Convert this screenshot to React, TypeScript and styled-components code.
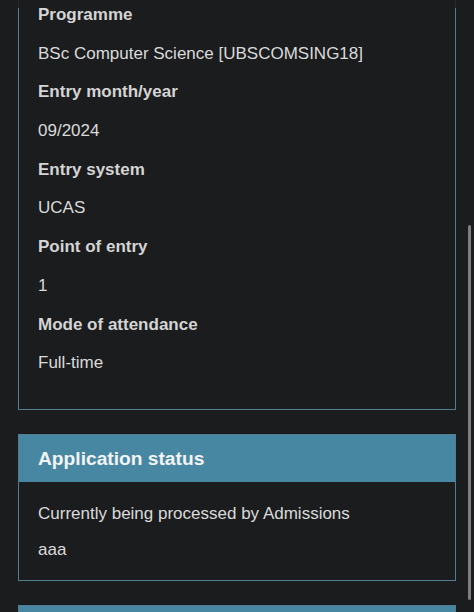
import React from 'react';
import styled, { createGlobalStyle } from 'styled-components';

const GlobalStyle = createGlobalStyle`
  html, body {
    margin: 0;
    padding: 0;
    background: #1b1c1e;
    overflow: hidden;
  }
  body {
    font-family: "Liberation Sans", Arial, sans-serif;
    color: #dcdcdc;
  }
`;

const Page = styled.div`
  display: flex;
  flex-direction: column;
  gap: 24px;
  padding: 0 18px;
  margin-top: -20px;
`;

const Card = styled.section`
  border: 1px solid #527d91;
  background: #1b1c1e;
`;

const CardHeader = styled.h2`
  margin: 0;
  height: 47px;
  display: flex;
  align-items: center;
  padding: 0 19px;
  background: #4787a2;
  color: #f2f4f5;
  font-size: 19.2px;
  font-weight: 700;
`;

const CardBody = styled.div<{ $gap: number; $top?: number; $bottom?: number }>`
  display: flex;
  flex-direction: column;
  gap: ${p => p.$gap}px;
  padding: ${p => p.$top ?? 19}px 19px ${p => p.$bottom ?? 18}px;
`;

const Label = styled.div`
  font-size: 17px;
  line-height: 22px;
  font-weight: 700;
  color: #d4d4d4;
`;

const Value = styled.div`
  font-size: 17px;
  line-height: 22px;
  color: #dadada;
`;

const TopStrip = styled.div`
  position: fixed;
  top: 0;
  left: 0;
  right: 0;
  height: 8px;
  background: rgba(27, 28, 30, 0.85);
`;

const ScrollThumb = styled.div`
  position: fixed;
  left: 468px;
  top: 225px;
  width: 3px;
  height: 375px;
  border-radius: 2px;
  background: #7e7e80;
`;

const details: [string, string][] = [
  ['Programme', 'BSc Computer Science [UBSCOMSING18]'],
  ['Entry month/year', '09/2024'],
  ['Entry system', 'UCAS'],
  ['Point of entry', '1'],
  ['Mode of attendance', 'Full-time'],
];

const App: React.FC = () => (
  <>
    <GlobalStyle />
    <Page>
      <Card>
        <CardBody $gap={16.7} $top={23} $bottom={35}>
          {details.map(([label, value]) => (
            <React.Fragment key={label}>
              <Label>{label}</Label>
              <Value>{value}</Value>
            </React.Fragment>
          ))}
        </CardBody>
      </Card>

      <Card>
        <CardHeader>Application status</CardHeader>
        <CardBody $gap={14} $top={21} $bottom={19}>
          <Value>Currently being processed by Admissions</Value>
          <Value>aaa</Value>
        </CardBody>
      </Card>

      <Card>
        <CardHeader>Offer conditions</CardHeader>
        <CardBody $gap={14}>
          <Value>&nbsp;</Value>
        </CardBody>
      </Card>
    </Page>
    <TopStrip />
    <ScrollThumb />
  </>
);

export default App;
